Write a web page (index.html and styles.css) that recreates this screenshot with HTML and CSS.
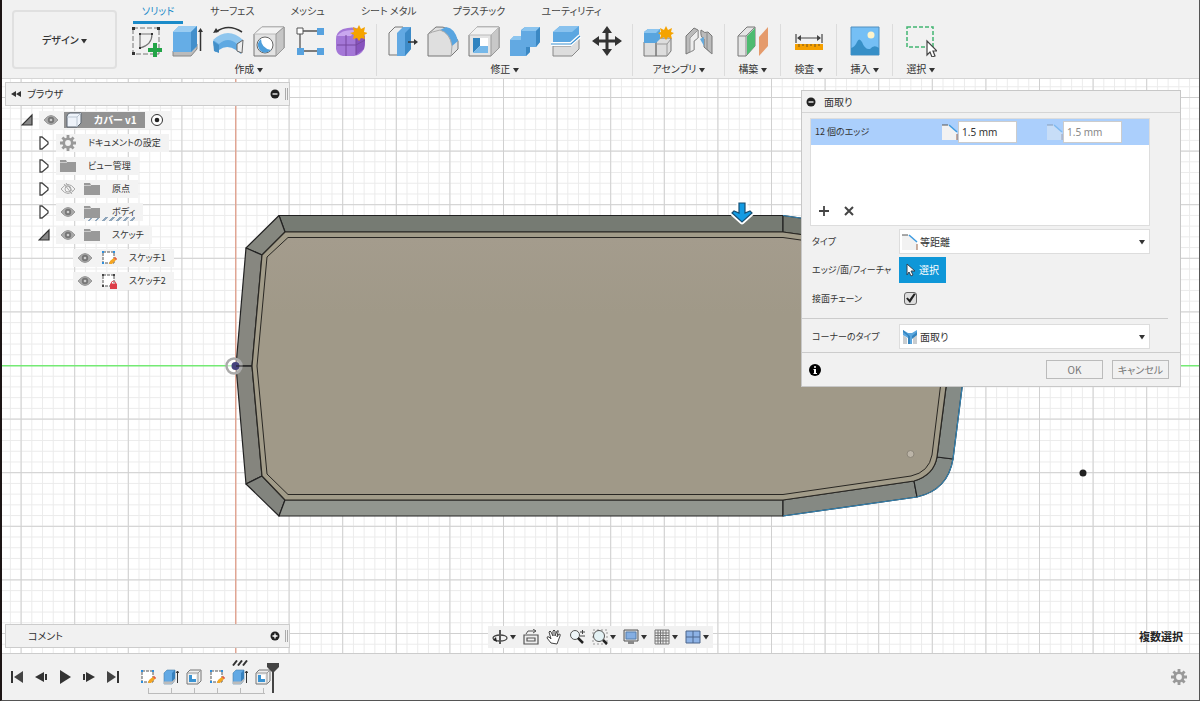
FILE: index.html
```
<!DOCTYPE html>
<html lang="ja">
<head>
	<meta charset="UTF-8">
	<meta name="viewport" content="width=device-width">
	<title>カバー v1</title>
	<link rel="stylesheet" href="styles.css">
</head>
<body>
	<!-- shared icons -->
	<svg class="defs" width="0" height="0" aria-hidden="true">
		<symbol id="eye" viewBox="0 0 16 12"><path d="M1 6Q8-3 15 6Q8 15 1 6Z" fill="#aaa" stroke="#999"/><circle cx="8" cy="6" r="3.2" fill="#777"/><circle cx="8" cy="6" r="1.3" fill="#ccc"/></symbol>
		<symbol id="eye-off" viewBox="0 0 16 12"><path d="M1 6Q8-3 15 6Q8 15 1 6Z" fill="none" stroke="#aaa"/><circle cx="8" cy="6" r="3" fill="none" stroke="#aaa"/><path d="M4 1l8 10M6 0l7 9" stroke="#aaa"/></symbol>
		<symbol id="folder" viewBox="0 0 16 14"><path d="M0 1h6l1 2h9v10H0z" fill="#999"/><path d="M0 3.500h7" stroke="#ccc"/></symbol>
		<symbol id="gear" viewBox="0 0 16 16"><path d="M8 0v16M0 8h16M2.400 2.400l11.200 11.200M13.600 2.400L2.400 13.600" stroke="#999" stroke-width="2.800"/><circle cx="8" cy="8" r="4.200" fill="#f2f2f2" stroke="#999" stroke-width="2.600"/></symbol>
		<symbol id="closed" viewBox="0 0 10 14"><path d="M1 1v12h2l6-5V6L3 1z" fill="#fff" stroke="#444" stroke-width="1.300"/></symbol>
		<symbol id="open" viewBox="0 0 12 12"><path d="M11 1v10H1z" fill="#888" stroke="#333" stroke-width="1.200"/></symbol>
		<symbol id="caret" viewBox="0 0 6 6"><path d="M0 1h6L3 5.500z" fill="#333"/></symbol>
		<symbol id="sketch" viewBox="0 0 16 16"><path d="M2 2h11v11H2z" fill="#fff" stroke="#555" stroke-dasharray="3 1"/><path d="M1 1h2v2H1zM12 1h2v2h-2zM1 12h2v2H1z" fill="#2f8fdc"/><path d="M8 14l1-3 5-4 2 2-5 5z" fill="#f5a623"/><path d="M13 8l2 2 1-1-2-2z" fill="#e0525a"/></symbol>
		<symbol id="sketch-lock" viewBox="0 0 16 16"><path d="M2 2h11v11H2z" fill="#fff" stroke="#555" stroke-dasharray="3 1"/><path d="M1 1h2v2H1zM12 1h2v2h-2zM1 12h2v2H1z" fill="#444"/><path d="M10.500 11V9q2-2 4 0v2" fill="none" stroke="#e05a62"/><path d="M9 10.500h7V16H9z" fill="#dd3d48"/></symbol>
		<symbol id="extrude-s" viewBox="0 0 16 16"><path d="M1 4l3-3h8v10l-3 4H1z" fill="#62a9e4" stroke="#467fac" stroke-width=".6"/><path d="M9 4l3-3v10l-3 4z" fill="#3680bd"/><path d="M1 12.500h8l3-3V12l-3 3H1z" fill="#bbb"/><path d="M14.500 14V2m-1.500 2l1.500-2L16 4" fill="none" stroke="#333"/></symbol>
		<symbol id="shell-s" viewBox="0 0 16 16"><path d="M1 4l3-3h11v11l-3 3H1z" fill="#eee" stroke="#777"/><path d="M1 4h11v11M12 4l3-3" fill="none" stroke="#999"/><path d="M3 6h7v7H3z" fill="#fff"/><path d="M3 6h3v4h4v3H3z" fill="#3b93d2"/></symbol>
		<symbol id="chamfer" viewBox="0 0 16 16"><path d="M0 1h7l8 7v8H0z" fill="#f2f2f2"/><path d="M0 1h6" stroke="#555"/><path d="M7 1l8 7" stroke="#3d9be0" stroke-width="1.500"/><path d="M15 10v6" stroke="#9a6547"/></symbol>
	</svg>

	<header class="ribbon">
		<button class="workspace-btn" type="button">デザイン <svg class="caret"><use href="#caret"/></svg></button>
		<div class="ribbon-main">
			<nav class="tabs">
				<a href="#" class="tab active">ソリッド</a>
				<a href="#" class="tab">サーフェス</a>
				<a href="#" class="tab">メッシュ</a>
				<a href="#" class="tab">シート メタル</a>
				<a href="#" class="tab">プラスチック</a>
				<a href="#" class="tab">ユーティリティ</a>
			</nav>
			<div class="groups">
				<section class="group">
					<div class="tools">
						<button type="button" aria-label="スケッチを作成"><svg viewBox="0 0 32 32"><path d="M3 3h26v26H3z" fill="none" stroke="#777" stroke-dasharray="5 2"/><path d="M10 23V9h12q0 11-12 14z" fill="none" stroke="#777" stroke-width="1.200"/><path d="M2 2h3v3H2zM27 2h3v3h-3zM2 27h3v3H2zM9 8h2v2H9zM21 8h2v2h-2zM9 22h2v2H9z" fill="#333"/><path d="M18 23h5v-5h4v5h5v4h-5v5h-4v-5h-5z" fill="#22a447"/></svg></button>
						<button type="button" aria-label="押し出し"><svg viewBox="0 0 32 32"><path d="M2 26h18l6-7v5l-6 7H2z" fill="#bbb" stroke="#888"/><path d="M2 7l6-6h18v20l-6 6H2z" fill="#65ade6"/><path d="M2 7l6-6h18l-6 6z" fill="#9accf1"/><path d="M20 7l6-6v20l-6 6z" fill="#438fcb"/><path d="M29.500 26V5" stroke="#333" stroke-width="1.500"/><path d="M27 7l2.500-4L32 7z" fill="#333"/></svg></button>
						<button type="button" aria-label="回転"><svg viewBox="0 0 32 32"><path d="M1 16q15-13 30 0l-2 13-5-4q-9-6-17 0l-4 2z" fill="#5fa9e2"/><path d="M1 15q15-14 30 0l-6 4q-9-8-18 0z" fill="#8fc6ee"/><path d="M1 16l6 4v8l-5-2z" fill="#438fc8"/><path d="M31 15l-6 4v7l5 2z" fill="#eee" stroke="#666"/><path d="M4 7Q16-2 30 7" fill="none" stroke="#333" stroke-width="1.500"/><path d="M1 8l3-5 3 4z" fill="#333"/></svg></button>
						<button type="button" aria-label="穴"><svg viewBox="0 0 32 32"><path d="M1 9l8-7h22v21l-8 8H1z" fill="#e3e3e3" stroke="#777"/><path d="M1 9h22l8-7H9z" fill="#f3f3f3" stroke="#bbb"/><path d="M23 9l8-7v21l-8 8z" fill="#c6c6c6" stroke="#999"/><circle cx="12" cy="20" r="8" fill="#fff" stroke="#666"/><path d="M8 14q0 9 10 11-7 6-12-1-3-6 2-10z" fill="#4d9edb"/></svg></button>
						<button type="button" aria-label="パターン"><svg viewBox="0 0 32 32"><path d="M9 6h14M6 9v14M9 26h14" stroke="#555" stroke-width="1.300"/><path d="M3 3h6v6H3z" fill="#fff" stroke="#555"/><path d="M23 3h7v7h-7zM3 23h7v7H3zM23 23h7v7h-7z" fill="#57a2df"/></svg></button>
						<button type="button" aria-label="フォームを作成"><svg viewBox="0 0 32 32"><path d="M1 14Q1 7 8 4q12-4 20 2 3 9 1 18-3 6-10 7H8q-6-1-7-7z" fill="#a477d7"/><path d="M2 11q5-7 18-6l-4 6z" fill="#c9a7ef"/><path d="M21 12l8-5q2 10 0 17l-8 6z" fill="#8753bd"/><path d="M11 10v21M2 20h19l9-5M21 12v18" stroke="#76499f" fill="none"/><path d="M24 0l2 4 4-2-1 5 4 1-4 2 1 4-4-1-2 3-2-3-4 1 1-4-4-2 4-1-1-5 4 2z" fill="#f5a300"/></svg></button>
					</div>
					<button class="group-menu" type="button">作成 <svg class="caret"><use href="#caret"/></svg></button>
				</section>
				<section class="group">
					<div class="tools">
						<button type="button" aria-label="プレス/プル"><svg viewBox="0 0 32 32"><path d="M3 8l6-6h8v23l-5 5H3z" fill="#eee" stroke="#777"/><path d="M11 8l6-6h8v22l-6 7h-8z" fill="#62a9e3"/><path d="M19 8l6-6v22l-6 7z" fill="#3c8ac7"/><path d="M22 17h8" stroke="#333" stroke-width="1.500"/><path d="M28 14l4 3-4 3z" fill="#333"/></svg></button>
						<button type="button" aria-label="フィレット"><svg viewBox="0 0 32 32"><path d="M1 9l8-7q15-2 22 14v8l-7 7H1z" fill="#dfdfdf" stroke="#777"/><path d="M13 5l6-3q9 1 12 14l-6 5Q23 8 13 5z" fill="#59a5e0"/><path d="M1 9q3-2 12-4 10 3 12 16l-1 10" fill="none" stroke="#aaa"/></svg></button>
						<button type="button" aria-label="シェル"><svg viewBox="0 0 32 32"><path d="M1 10l8-8h22v21l-8 8H1z" fill="#e4e4e4" stroke="#777"/><path d="M23 10l8-8v21l-8 8z" fill="#c8c8c8" stroke="#999"/><path d="M1 10h22l8-8H9z" fill="#f2f2f2" stroke="#bbb"/><path d="M5 13h15v15H5z" fill="#fff"/><path d="M5 13h7v8l-7 7z" fill="#2f83bf"/><path d="M5 28l7-7h8v7z" fill="#76b8e9"/></svg></button>
						<button type="button" aria-label="結合"><svg viewBox="0 0 32 32"><path d="M1 15l4-4h7V5l4-3h15v15l-4 5h-6v5l-4 4H1z" fill="#62a9e2"/><path d="M1 15l4-4h7v4zM12 6l4-4h15l-4 4z" fill="#8cc5ef"/><path d="M27 6l4-4v15l-4 5zM17 22h4v5l-4 4z" fill="#3b88c3"/></svg></button>
						<button type="button" aria-label="ボディを分割"><svg viewBox="0 0 32 32"><path d="M3 7l7-6h19v10l-7 6H3z" fill="#5ca7e1"/><path d="M3 7l7-6h19l-7 6z" fill="#89c2ee"/><path d="M3 21h18l8-7v10l-7 7H3z" fill="#ddd" stroke="#888"/><path d="M1 19h20l9-8" fill="none" stroke="#fff" stroke-width="4"/><path d="M1 19h20l9-8" fill="none" stroke="#398fd0" stroke-width="1.200"/></svg></button>
						<button type="button" aria-label="移動"><svg viewBox="0 0 32 32"><path d="M16 5v22M5 16h22" stroke="#333" stroke-width="3"/><path d="M16 1l5 7H11zM16 31l5-7H11zM1 16l7-5v10zM31 16l-7-5v10z" fill="#333"/></svg></button>
					</div>
					<button class="group-menu" type="button">修正 <svg class="caret"><use href="#caret"/></svg></button>
				</section>
				<section class="group">
					<div class="tools">
						<button type="button" aria-label="新規コンポーネント"><svg viewBox="0 0 32 32"><path d="M2 17h12v14H2zM14 17l4-4h11v13l-4 5H14z" fill="#ddd" stroke="#777"/><path d="M14 19h11l4-5M25 19v12" fill="none" stroke="#999"/><path d="M2 7l4-3h12v10l-4 4H2z" fill="#58a5df"/><path d="M2 7l4-3h12l-4 4H2z" fill="#8cc5ef"/><path d="M24 1l2 4 4-2-1 4 3 1-3 2 1 4-4-2-2 3-2-3-4 2 1-4-3-2 3-1-1-4 4 2z" fill="#f5a300"/></svg></button>
						<button type="button" aria-label="ジョイント"><svg viewBox="0 0 32 32"><path d="M3 11l8-8 4 2v8l-4 3v9l-8 4z" fill="#bbb" stroke="#777"/><path d="M7 13l8-8v8l-4 3v9l-4 2z" fill="#eee" stroke="#999"/><path d="M18 5q4 4 7 2l4 4v18l-8-7v-8q-4-2-3-9z" fill="#bbb" stroke="#777"/><path d="M24 8v16l5 5" fill="none" stroke="#888"/><path d="M17 14l4-2v9z" fill="#65a9db"/></svg></button>
					</div>
					<button class="group-menu" type="button">アセンブリ <svg class="caret"><use href="#caret"/></svg></button>
				</section>
				<section class="group single">
					<div class="tools">
						<button type="button" aria-label="平面"><svg viewBox="0 0 32 32"><path d="M1 11l9-9h8v19l-9 10H1z" fill="#e5e5e5" stroke="#777"/><path d="M1 11h8l9-9M9 11v20" fill="none" stroke="#888"/><path d="M10 11l8-8v18l-8 9z" fill="#4dbb70"/><path d="M22 12l9-10v19l-9 10z" fill="#e59b6c"/></svg></button>
					</div>
					<button class="group-menu" type="button">構築 <svg class="caret"><use href="#caret"/></svg></button>
				</section>
				<section class="group single">
					<div class="tools">
						<button type="button" aria-label="計測"><svg viewBox="0 0 32 32"><path d="M3 9v9M29 9v9M5 13h22" stroke="#444" stroke-width="1.200"/><path d="M4 13l4-3v6zM28 13l-4-3v6z" fill="#444"/><path d="M2 19h28v6H2z" fill="#f5a000"/><path d="M6 19v3M10 19v2M14 19v3M18 19v2M22 19v3M26 19v2" stroke="#75521b"/></svg></button>
					</div>
					<button class="group-menu" type="button">検査 <svg class="caret"><use href="#caret"/></svg></button>
				</section>
				<section class="group single">
					<div class="tools">
						<button type="button" aria-label="画像を挿入"><svg viewBox="0 0 32 32"><path d="M2 2h28v28H2z" fill="#75bff5" stroke="#508fbf"/><circle cx="22" cy="10" r="3.500" fill="#fff4ca"/><path d="M2 23q4-1 6-6t5 0q3 8 8 7 4-5 9-1v7H2z" fill="#378fc7"/></svg></button>
					</div>
					<button class="group-menu" type="button">挿入 <svg class="caret"><use href="#caret"/></svg></button>
				</section>
				<section class="group single">
					<div class="tools">
						<button type="button" aria-label="選択"><svg viewBox="0 0 32 32"><path d="M2 2h26v20H2z" fill="none" stroke="#42b572" stroke-width="1.500" stroke-dasharray="4 2"/><path d="M22 16v14l3-3 2 5 3-1-2-5h4z" fill="#fff" stroke="#444" stroke-width="1.200"/></svg></button>
					</div>
					<button class="group-menu" type="button">選択 <svg class="caret"><use href="#caret"/></svg></button>
				</section>
			</div>
		</div>
	</header>

	<main class="viewport">
		<svg class="canvas" width="100%" height="100%" aria-label="モデル">
			<defs>
				<pattern id="minor" x="235" y="365" width="10.72" height="10.72" patternUnits="userSpaceOnUse"><path d="M0 .5H10.720M.5 0V10.720" stroke="#ebebeb"/></pattern>
				<pattern id="major" x="235" y="365" width="53.6" height="53.6" patternUnits="userSpaceOnUse"><path d="M0 .5H53.600M.5 0V53.600" stroke="#d0d0d0"/></pattern>
				<linearGradient id="face" x1="0" y1="0" x2="0" y2="1"><stop offset="0" stop-color="#a49c8d"/><stop offset=".3" stop-color="#a09988"/><stop offset="1" stop-color="#a09988"/></linearGradient>
			</defs>
			<g transform="translate(-2 -79)">
				<rect width="3000" height="2000" fill="url(#minor)"/>
				<rect width="3000" height="2000" fill="url(#major)"/>
				<path d="M235 0h1.500v2000h-1.500z" fill="#e0a593"/>
				<path d="M0 365h3000v1.500H0z" fill="#74ea74"/>
				<!-- chamfered rim, one facet per side -->
				<g stroke="#222" stroke-width="1.200" stroke-linejoin="round">
					<path d="M279 215.500H783L783 232H285z" fill="#767b73"/>
					<path d="M279 215.500L246 248L262 255L285 232z" fill="#85877f"/>
					<path d="M246 248L236 366H252L262 255z" fill="#878780"/>
					<path d="M236 366L246 484L262 476L252 366z" fill="#85857e"/>
					<path d="M246 484L279 516L285 500L262 476z" fill="#82847e"/>
					<path d="M279 516H783V500H285z" fill="#92968f"/>
					<path d="M783 516L917 497L914 481L783 500z" fill="#858983"/>
					<path d="M917 497Q948 490 953 459L937 457Q934 475 914 481z" fill="#848a85"/>
					<path d="M953 459L970 325L954 325L937 457z" fill="#858b86"/>
					<path d="M783 215.500L940 238L970 325H954L925 252L783 232z" fill="#74786f"/>
				</g>
				<path d="M783 215.500L940 238L970 325L953 459Q948 490 917 497L783 516" fill="none" stroke="#3484b4" stroke-width="1.200"/>
				<path d="M285 232H783L925 252L954 325L937 457Q934 475 914 481L783 500H285L262 476L252 366L262 255z" fill="#a29c89" stroke="#292723" stroke-width="1.200"/>
				<path d="M288 237.500H783L921 257L948 325L932 455Q929 472 911 476L783 494.500H288L267 474L257 366L267 257z" fill="url(#face)" stroke="#292723"/>
				<!-- origin and points -->
				<circle cx="234" cy="366" r="7.500" fill="#fff" fill-opacity=".5" stroke="#aaa" stroke-width="2.500"/>
				<circle cx="235.500" cy="366" r="4" fill="#45427d"/>
				<path d="M236 366h16" stroke="#222"/>
				<circle cx="910.500" cy="454" r="3.500" fill="#bcb5a8" stroke="#8c8679"/>
				<circle cx="1083" cy="473" r="3.500" fill="#222"/>
				<path d="M739 203h6v10l5-2 2 2-10 9-10-9 2-2 5 2z" fill="#139be3" stroke="#fff" stroke-width="5" stroke-linejoin="round"/>
				<path d="M739 203h6v10l5-2 2 2-10 9-10-9 2-2 5 2z" fill="#139be3" stroke="#174f73" stroke-width="1.200"/>
			</g>
		</svg>

		<aside class="browser">
			<div class="panel-bar">
				<svg width="12" height="8" viewBox="0 0 12 8"><path d="M6 1v6L1 4zM11 1v6L6 4z" fill="#333"/></svg>
				<span class="panel-title">ブラウザ</span>
				<button type="button" aria-label="最小化"><svg width="10" height="10" viewBox="0 0 10 10"><circle cx="5" cy="5" r="4.500" fill="#222"/><path d="M2.500 5h5" stroke="#fff" stroke-width="1.300"/></svg></button>
				<i class="grip"></i>
			</div>
			<ul class="tree">
				<li class="root"><svg class="twist"><use href="#open"/></svg><div class="node"><svg class="i16"><use href="#eye"/></svg><span class="doc"><svg class="i16" viewBox="0 0 16 16"><path d="M1 4q1-3 3-3h11v10l-4 4H1z" fill="#eef3fa" stroke="#5a6570"/><path d="M1 5h10v10M11 5l4-4" fill="none" stroke="#bbc6d2"/></svg>カバー v1</span><svg class="radio" viewBox="0 0 14 14"><circle cx="7" cy="7" r="5.500" fill="#fff" stroke="#333"/><circle cx="7" cy="7" r="2.300" fill="#222"/></svg></div></li>
				<li class="l1"><svg class="twist"><use href="#closed"/></svg><div class="node"><svg class="i16"><use href="#gear"/></svg><span>ドキュメントの設定</span></div></li>
				<li class="l1"><svg class="twist"><use href="#closed"/></svg><div class="node"><svg class="i16"><use href="#folder"/></svg><span>ビュー管理</span></div></li>
				<li class="l1"><svg class="twist"><use href="#closed"/></svg><div class="node"><svg class="i16"><use href="#eye-off"/></svg><svg class="i16"><use href="#folder"/></svg><span>原点</span></div></li>
				<li class="l1"><svg class="twist"><use href="#closed"/></svg><div class="node"><svg class="i16"><use href="#eye"/></svg><div class="hatched"><svg class="i16"><use href="#folder"/></svg><span>ボディ</span></div></div></li>
				<li class="l1"><svg class="twist"><use href="#open"/></svg><div class="node"><svg class="i16"><use href="#eye"/></svg><svg class="i16"><use href="#folder"/></svg><span>スケッチ</span></div></li>
				<li class="l2"><div class="node"><svg class="i16"><use href="#eye"/></svg><svg class="i16"><use href="#sketch"/></svg><span>スケッチ1</span></div></li>
				<li class="l2"><div class="node"><svg class="i16"><use href="#eye"/></svg><svg class="i16"><use href="#sketch-lock"/></svg><span>スケッチ2</span></div></li>
			</ul>
		</aside>

		<div class="panel-bar comments">
			<span class="panel-title">コメント</span>
			<button type="button" aria-label="展開"><svg width="10" height="10" viewBox="0 0 10 10"><circle cx="5" cy="5" r="4.500" fill="#222"/><path d="M2.500 5h5M5 2.500v5" stroke="#fff" stroke-width="1.300"/></svg></button>
			<i class="grip"></i>
		</div>

		<form class="dialog">
			<div class="dialog-head">
				<svg width="10" height="10" viewBox="0 0 10 10"><circle cx="5" cy="5" r="4.500" fill="#222"/><path d="M2.500 5h5" stroke="#fff" stroke-width="1.300"/></svg>
				面取り
			</div>
			<div class="dialog-body">
				<div class="edge-list">
					<div class="edge-row">
						<span class="edge-name">12 個のエッジ</span>
						<svg class="i16"><use href="#chamfer"/></svg><input type="text" value="1.5 mm" aria-label="距離 1">
						<svg class="i16 dim"><use href="#chamfer"/></svg><input type="text" value="1.5 mm" aria-label="距離 2" disabled>
					</div>
					<div class="edge-actions">
						<button type="button" aria-label="追加"><svg width="12" height="12" viewBox="0 0 12 12"><path d="M6 1v10M1 6h10" stroke="#444" stroke-width="1.800"/></svg></button>
						<button type="button" aria-label="削除"><svg width="12" height="12" viewBox="0 0 12 12"><path d="M2 2l8 8M10 2l-8 8" stroke="#444" stroke-width="2"/></svg></button>
					</div>
				</div>
				<div class="field">
					<label for="type">タイプ</label>
					<div class="combo"><svg class="i16"><use href="#chamfer"/></svg><select id="type"><option>等距離</option></select><svg class="caret"><use href="#caret"/></svg></div>
				</div>
				<div class="field">
					<label for="pick">エッジ/面/フィーチャ</label>
					<button id="pick" class="pick" type="button"><svg width="10" height="14" viewBox="0 0 10 14"><path d="M1 1v11l2-3 2 4 2-1-2-4h4z" fill="#fff" stroke="#345"/></svg>選択</button>
				</div>
				<div class="field">
					<label for="chain">接面チェーン</label>
					<input id="chain" type="checkbox" checked>
				</div>
			</div>
			<div class="dialog-body corner">
				<div class="field">
					<label for="corner">コーナーのタイプ</label>
					<div class="combo"><svg class="i16" viewBox="0 0 16 16"><path d="M1 6l4 3v6H1zM15 6l-4 3v6h4z" fill="#c9cdd0"/><path d="M1 1l5 3h4l5-3v5l-5 3v6H6V9L1 6z" fill="#5aa6de"/><path d="M1 3l5 4v8h2V7L1 1zM15 3l-5 4v3l5-4z" fill="#3484be"/></svg><select id="corner"><option>面取り</option></select><svg class="caret"><use href="#caret"/></svg></div>
				</div>
			</div>
			<div class="dialog-foot">
				<svg class="info" width="12" height="12" viewBox="0 0 12 12"><circle cx="6" cy="6" r="6" fill="#000"/><path d="M5 2.200h2v1.600H5zM4.500 5H7v4h1v1H4.500V9H5V6h-.5z" fill="#fff"/></svg>
				<button type="button">OK</button>
				<button type="button">キャンセル</button>
			</div>
		</form>

		<div class="navbar">
			<button type="button" aria-label="オービット"><svg viewBox="0 0 16 16"><ellipse cx="8" cy="9" rx="7" ry="3" fill="none" stroke="#444" stroke-width="1.300"/><path d="M8 1v14" stroke="#555" stroke-width="2"/><path d="M4 8l-3 3 4 2z" fill="#222"/></svg><svg class="caret"><use href="#caret"/></svg></button>
			<button type="button" aria-label="ビュー正面"><svg viewBox="0 0 16 16"><path d="M1 6h14v9H1zM4 9h8v3H4z" fill="#eee" stroke="#555" stroke-width="1.200"/><path d="M3 5l2-3h8M10 0l3 2-3 2" fill="none" stroke="#555"/></svg></button>
			<button type="button" aria-label="画面移動"><svg viewBox="0 0 16 16"><path d="M5 14L1 9q0-2 2-1l2 2-2-7q1-2 2 0l2 4V2q1-2 2 0v5l2-5q2-1 1 1l-1 5 2-3q2 0 1 2l-3 8z" fill="#fff" stroke="#444"/></svg></button>
			<button type="button" aria-label="ズーム"><svg viewBox="0 0 16 16"><circle cx="6" cy="6" r="4.500" fill="#eef5f8" stroke="#555"/><path d="M9 9l5 5" stroke="#222" stroke-width="2.500"/><path d="M11 3h5M13.500 1v4M11 7h5" stroke="#444"/></svg></button>
			<button type="button" aria-label="窓ズーム"><svg viewBox="0 0 16 16"><path d="M1 1h14v14H1z" fill="none" stroke="#999" stroke-dasharray="2 2"/><circle cx="7" cy="7" r="5.500" fill="#e3f1f4" stroke="#555"/><path d="M11 11l4 4" stroke="#222" stroke-width="2.500"/></svg><svg class="caret"><use href="#caret"/></svg></button>
			<button type="button" aria-label="表示設定"><svg viewBox="0 0 16 16"><path d="M1 1h14v11H1z" fill="#ddd" stroke="#555"/><path d="M3 3h10v7H3z" fill="#84aee2" stroke="#557eae"/><path d="M5 12h6v3H5z" fill="#888"/></svg><svg class="caret"><use href="#caret"/></svg></button>
			<button type="button" aria-label="グリッド"><svg viewBox="0 0 16 16"><path d="M1 1h14v14H1zM1 4h14M1 6.500h14M1 9h14M1 12h14M4 1v14M6.500 1v14M9 1v14M12 1v14" fill="#eee" stroke="#777"/></svg><svg class="caret"><use href="#caret"/></svg></button>
			<button type="button" aria-label="ビューポート"><svg viewBox="0 0 16 16"><path d="M1 2h14v12H1z" fill="#8db2e5" stroke="#4b658b"/><path d="M8 2v12M1 8h14" stroke="#4b658b"/></svg><svg class="caret"><use href="#caret"/></svg></button>
		</div>
		<p class="status">複数選択</p>
	</main>

	<footer class="timeline">
		<div class="playback">
			<button type="button" aria-label="先頭"><svg viewBox="0 0 14 14"><path d="M2 1v12" stroke="#333" stroke-width="2"/><path d="M13 1v12L4 7z" fill="#444"/></svg></button>
			<button type="button" aria-label="前へ"><svg viewBox="0 0 14 14"><path d="M10 2v10L1 7z" fill="#333"/><path d="M12 4v6" stroke="#333" stroke-width="2"/></svg></button>
			<button type="button" aria-label="再生"><svg viewBox="0 0 14 14"><path d="M2 0v14l11-7z" fill="#333"/></svg></button>
			<button type="button" aria-label="次へ"><svg viewBox="0 0 14 14"><path d="M4 2v10l9-5z" fill="#333"/><path d="M2 4v6" stroke="#333" stroke-width="2"/></svg></button>
			<button type="button" aria-label="末尾"><svg viewBox="0 0 14 14"><path d="M1 1v12l9-6z" fill="#444"/><path d="M12 1v12" stroke="#333" stroke-width="2"/></svg></button>
		</div>
		<ol class="features">
			<li><svg class="i16"><use href="#sketch"/></svg></li>
			<li><svg class="i16"><use href="#extrude-s"/></svg></li>
			<li><svg class="i16"><use href="#shell-s"/></svg></li>
			<li><svg class="i16"><use href="#sketch"/></svg></li>
			<li><svg class="i16"><use href="#extrude-s"/></svg><svg class="busy" viewBox="0 0 16 6"><path d="M1 5.500L5 .5M6 5.500l4-5M11 5.500l4-5" stroke="#333" stroke-width="2"/></svg></li>
			<li><svg class="i16"><use href="#shell-s"/></svg><svg class="marker" viewBox="0 0 12 30"><path d="M0 0h12v4L7 9v21H5V9L0 4z" fill="#444"/></svg></li>
		</ol>
		<button class="settings" type="button" aria-label="設定"><svg class="i16"><use href="#gear"/></svg></button>
	</footer>
</body>
</html>
```

FILE: styles.css
```
* {
	box-sizing: border-box;
	margin: 0;
	padding: 0;
}

body {
	display: flex;
	flex-direction: column;
	height: 100vh;
	overflow: hidden;
	border: solid #555;
	border-width: 0 1px 1px 2px;
	border-left-color: #1c1515;
	background: #f1f1f1;
	color: #333;
	font-family: "Noto Sans CJK JP", "Noto Sans", sans-serif;
	font-size: 10px;
	font-feature-settings: "palt";
	line-height: 14px;
}

button,
input,
select {
	font: inherit;
	font-feature-settings: inherit;
	color: inherit;
}

button {
	border: 0;
	background: none;
}

svg {
	display: block;
	flex: none;
}

ul,
ol {
	list-style: none;
}

.defs {
	position: absolute;
}

.i16 {
	width: 16px;
	height: 16px;
}

.caret {
	display: inline-block;
	width: 6px;
	height: 6px;
}

/* ribbon */
.ribbon {
	display: flex;
	flex: none;
	gap: 12px;
	padding-left: 10px;
	border-bottom: 1px solid #d5d5d5;
}

.workspace-btn {
	width: 105px;
	height: 59px;
	margin-top: 10px;
	border: 2px solid #e0e0e0;
	border-radius: 4px;
	font-weight: 500;
}

.tabs {
	display: flex;
	gap: 18px;
	padding-left: 4px;
}

.tab {
	height: 24px;
	padding: 4px 9px 0;
	border-bottom: 3px solid transparent;
	color: #444;
	text-decoration: none;
	white-space: nowrap;
}

.tab.active {
	border-color: #1b8bc9;
	color: #1b8bc9;
}

.groups {
	display: flex;
	padding-bottom: 2px;
}

.group {
	display: flex;
	flex-direction: column;
	align-items: center;
	gap: 5px;
	padding: 1px 9px 0;
	border-left: 1px solid #dcdcdc;
}

.group:first-child {
	padding-left: 1px;
	border-left: 0;
}

.group.single {
	width: 56px;
	padding: 1px 0 0;
}

.tools {
	display: flex;
	gap: 9px;
}

.tools svg {
	width: 32px;
	height: 32px;
}

.group-menu {
	line-height: 14px;
	white-space: nowrap;
}

/* viewport */
.viewport {
	position: relative;
	flex: 1;
	min-height: 0;
	background: #fff;
}

.canvas {
	position: absolute;
	inset: 0;
}

.panel-bar {
	display: flex;
	align-items: center;
	gap: 5px;
	height: 24px;
	padding: 0 1px 0 4px;
	border: 1px solid #ccc;
	background: #f1f1f1;
}

.panel-title {
	flex: 1;
}

.grip {
	width: 3px;
	height: 12px;
	border: solid #aaa;
	border-width: 0 1px;
}

.browser {
	position: absolute;
	top: 3px;
	left: 3px;
	width: 285px;
}

.comments {
	position: absolute;
	bottom: 5px;
	left: 3px;
	width: 285px;
	padding-left: 22px;
}

/* browser tree */
.tree {
	padding-top: 2px;
	font-size: 9px;
}

.tree li {
	display: flex;
	align-items: center;
	gap: 6px;
	height: 23px;
	padding-left: 33px;
}

.tree .root {
	padding-left: 16px;
}

.tree .l2 {
	padding-left: 68px;
}

.twist {
	width: 12px;
	height: 14px;
}

.node {
	display: flex;
	align-items: center;
	gap: 8px;
	height: 18px;
	padding: 0 8px 0 4px;
	background: #f3f3f3;
}

.l1 .node > span,
.hatched span,
.l2 .node > span {
	padding-left: 4px;
}

.root .node {
	gap: 5px;
}

.doc {
	display: flex;
	align-items: center;
	gap: 12px;
	height: 16px;
	padding: 0 8px 0 2px;
	background: #929292;
	color: #fff;
	font-size: 10px;
	font-weight: 700;
}

.radio {
	width: 14px;
	height: 14px;
}

.hatched {
	display: flex;
	align-items: center;
	gap: 8px;
	height: 18px;
	background: repeating-linear-gradient(135deg, #8ea5bb 0 2px, transparent 2px 5px) bottom / 100% 4px no-repeat;
}

/* dialog */
.dialog {
	position: absolute;
	top: 11px;
	right: 18px;
	width: 380px;
	border: 1px solid #c8c8c8;
	background: #f1f1f1;
}

.dialog-head {
	display: flex;
	align-items: center;
	gap: 8px;
	height: 22px;
	padding-left: 4px;
	border-bottom: 1px solid #d5d5d5;
}

.dialog-body {
	display: flex;
	flex-direction: column;
	gap: 3px;
	padding: 5px 30px 7px 8px;
}

.edge-list {
	display: flex;
	flex-direction: column;
	justify-content: space-between;
	height: 108px;
	border: 1px solid #ddd;
	background: #fff;
}

.edge-row {
	display: flex;
	align-items: center;
	height: 26px;
	padding: 0 27px 0 4px;
	background: #abcffc;
}

.edge-name {
	flex: 1;
	font-size: 9px;
}

.edge-row input {
	width: 59px;
	height: 22px;
	padding: 0 3px;
	border: 1px solid #ccc;
	background: #fff;
	font-family: "Noto Sans", sans-serif;
	font-size: 10px;
}

.edge-row input:disabled {
	color: #888;
}

.dim {
	margin-left: 30px;
	opacity: .4;
}

.edge-actions {
	display: flex;
	gap: 13px;
	padding: 0 7px 8px;
}

.field {
	display: flex;
	align-items: center;
	min-height: 25px;
	padding-left: 2px;
}

.field label {
	width: 87px;
	font-size: 9px;
	white-space: nowrap;
}

.combo {
	position: relative;
	flex: 1;
}

.combo select {
	display: block;
	width: 100%;
	height: 25px;
	padding-left: 20px;
	border: 1px solid #ddd;
	border-radius: 0;
	background: #fff;
	appearance: none;
}

.combo .i16 {
	position: absolute;
	top: 5px;
	left: 3px;
}

.combo .caret {
	position: absolute;
	top: 10px;
	right: 5px;
}

.pick {
	display: flex;
	align-items: center;
	gap: 3px;
	height: 26px;
	padding: 0 7px;
	background: #0f97d8;
	color: #fff;
}

.field input {
	width: 13px;
	height: 13px;
	margin-left: 5px;
	border: 1px solid #666;
	border-radius: 3px;
	background: #ddd;
	appearance: none;
}

.field input:checked::before {
	content: "";
	display: block;
	width: 11px;
	height: 11px;
	background: #222;
	clip-path: polygon(10% 50%, 25% 40%, 40% 60%, 80% 5%, 98% 10%, 45% 92%);
}

.corner {
	margin-right: 12px;
	padding: 5px 18px 3px 8px;
	border-top: 1px solid #ccc;
}

.dialog-foot {
	display: flex;
	align-items: center;
	gap: 9px;
	height: 34px;
	padding: 0 11px 0 7px;
	border-top: 1px solid #ccc;
}

.info {
	margin-right: auto;
}

.dialog-foot button {
	width: 57px;
	height: 19px;
	border: 1px solid #bbb;
	color: #777;
}

/* view controls */
.navbar {
	position: absolute;
	right: 0;
	bottom: 5px;
	left: 0;
	display: flex;
	align-items: center;
	gap: 7px;
	width: fit-content;
	height: 22px;
	margin: 0 auto;
	padding: 0 4px;
	background: #f1f1f1;
}

.navbar button {
	display: flex;
	align-items: center;
	gap: 2px;
}

.navbar svg:first-child {
	width: 16px;
	height: 16px;
}

.status {
	position: absolute;
	right: 16px;
	bottom: 10px;
	color: #222;
	font-size: 11px;
	font-weight: 700;
}

/* timeline */
.timeline {
	display: flex;
	flex: none;
	align-items: center;
	height: 47px;
	padding: 0 12px 0 8px;
	border-top: 1px solid #ccc;
}

.playback {
	display: flex;
	gap: 10px;
	margin-right: 20px;
}

.playback svg {
	width: 14px;
	height: 14px;
}

.features {
	display: flex;
	margin-right: auto;
}

.features li {
	position: relative;
	width: 23px;
}

/* tick rail under each feature */
.features li::after {
	content: "";
	position: absolute;
	top: 19px;
	left: 8px;
	width: 23px;
	height: 5px;
	border: solid #bbb;
	border-width: 0 0 1px 1px;
}

.features li:last-child::after {
	width: 1px;
}

.busy {
	position: absolute;
	top: -9px;
	left: 0;
	width: 16px;
	height: 6px;
}

.marker {
	position: absolute;
	top: -6px;
	left: 12px;
	width: 12px;
	height: 30px;
}
```
